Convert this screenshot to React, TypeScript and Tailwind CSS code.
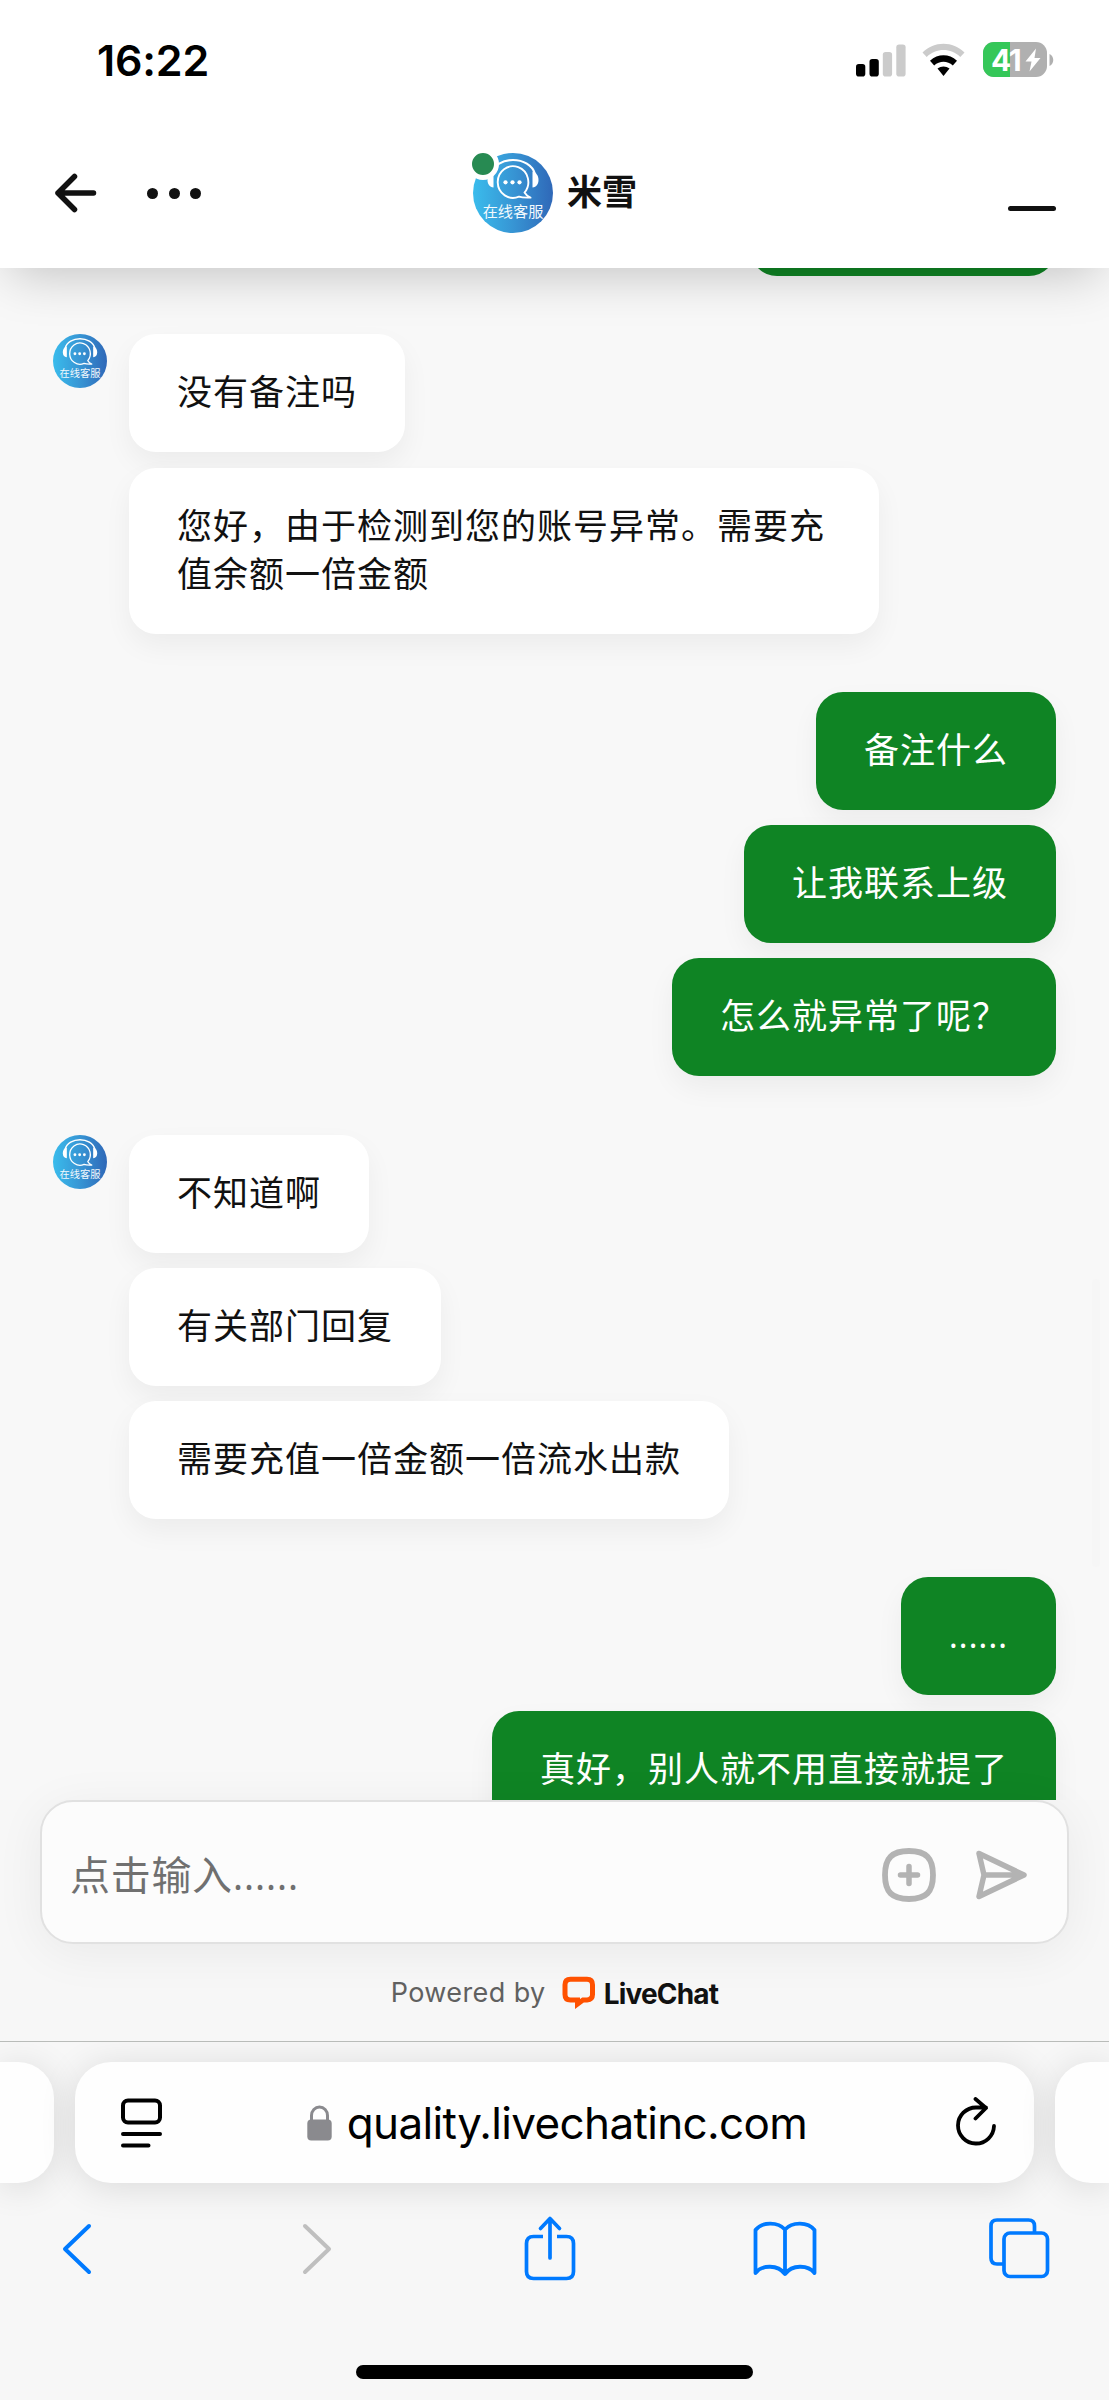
import { clsx } from 'clsx';

interface MessageGroup {
  from: 'agent' | 'visitor';
  messages: string[];
  className?: string;
}

const groups: MessageGroup[] = [
  {
    from: 'agent',
    messages: ['没有备注吗', '您好，由于检测到您的账号异常。需要充值余额一倍金额'],
    className: 'gap-4',
  },
  {
    from: 'visitor',
    messages: ['备注什么', '让我联系上级', '怎么就异常了呢？'],
    className: 'gap-[15px]',
  },
  {
    from: 'agent',
    messages: ['不知道啊', '有关部门回复', '需要充值一倍金额一倍流水出款'],
    className: 'gap-[15px]',
  },
  {
    from: 'visitor',
    messages: ['......', '真好，别人就不用直接就提了'],
    className: 'gap-4',
  },
];

function AgentAvatar({ className }: { className?: string }) {
  return (
    <svg viewBox="0 0 80 80" className={clsx('shrink-0', className)}>
      <defs>
        <linearGradient id="avatar" x1="0" y1="0" x2="1" y2="0">
          <stop offset="0" stopColor="#3abcec" />
          <stop offset="0.5" stopColor="#3795d4" />
          <stop offset="1" stopColor="#2f68b8" />
        </linearGradient>
      </defs>
      <circle cx="40" cy="40" r="40" fill="url(#avatar)" />
      {/* Headset */}
      <path d="M18 21C20.500 12 30 7 40 7s19.500 5 22 14" fill="none" stroke="#fff" strokeWidth="2.200" />
      <path d="M20.500 18.500v16c-4-.5-6-3.500-6-7.500s2-7.500 6-8.500zM59.500 18.500v16c4-.5 6-3.500 6-7.500s-2-7.500-6-8.500z" fill="#fff" />
      {/* Speech bubble */}
      <path
        d="M51.500 39.500A15.300 15.800 0 1 0 46 43.600c3 1.200 7 1.200 11.500 1-2.500-1-4.500-2.600-6-5.100z"
        fill="none"
        stroke="#fff"
        strokeWidth="1.900"
        strokeLinejoin="round"
      />
      <circle cx="32.500" cy="29.300" r="2.100" fill="#fff" />
      <circle cx="39.500" cy="29.300" r="2.100" fill="#fff" />
      <circle cx="46.500" cy="29.300" r="2.100" fill="#fff" />
      <text x="40" y="63.500" fontSize="15.200" textAnchor="middle" fill="#f2f9fd">
        在线客服
      </text>
    </svg>
  );
}

function StatusBar() {
  return (
    <div className="flex h-[118px] items-center justify-between pt-px pl-[97px] pr-[55px]">
      <span className="mt-px text-[43px] leading-none font-semibold tracking-[-0.200px] text-black">16:22</span>
      <div className="flex items-center">
        <svg width="50" height="34" viewBox="0 0 50 34" className="mr-[16px]">
          <rect x="0" y="21" width="9.300" height="12.500" rx="2.800" fill="#000" />
          <rect x="13.500" y="16" width="9.300" height="17.500" rx="2.800" fill="#000" />
          <rect x="26.800" y="9" width="9.300" height="24.500" rx="2.800" fill="#cbcbcb" />
          <rect x="40.300" y="1.500" width="9.300" height="32" rx="2.800" fill="#cbcbcb" />
        </svg>
        <svg width="44" height="34" viewBox="0 0 44 34" className="mr-[17px]">
          <path d="M0.500 9.500C12 -2.200 31 -2.200 42.500 9.500L38.300 14C29 4.800 14 4.800 4.700 14z" fill="#cbcbcb" />
          <path d="M8 17.800c8-7.300 19-7.300 27 0l-4.200 4.600c-5.400-4.800-13.200-4.800-18.600 0z" fill="#000" />
          <path d="M15.500 25.500c3.500-2.800 8.500-2.800 12 0l-6 7.500z" fill="#000" />
        </svg>
        <div className="relative flex h-[35px] w-[64px] items-center overflow-hidden rounded-[11px] bg-[#b0b0b0]">
          <div className="absolute inset-y-0 left-0 w-[27px] bg-[#35c759]" />
          <span className="relative ml-[8px] text-[30px] leading-none font-bold tracking-[-1.500px] text-white">41</span>
          <svg width="16" height="24" viewBox="0 0 16 24" className="absolute left-[42px] top-[6px]">
            <path d="M11 0.500L0.500 13.500h6L4.500 23.500L15.500 10h-6z" fill="#fff" />
          </svg>
        </div>
        <svg width="7" height="12" viewBox="0 0 7 12">
          <path d="M2.500 0c5 2 5 10 0 12z" fill="#b0b0b0" />
        </svg>
      </div>
    </div>
  );
}

function ChatHeader() {
  return (
    <div className="grid h-[150px] grid-cols-3 items-center pl-[54px] pr-[53px]">
      <div className="flex items-center gap-[50px]">
        <svg width="43" height="40" viewBox="0 0 43 40" fill="none" stroke="#111" strokeWidth="5.500" strokeLinecap="round" strokeLinejoin="round">
          <path d="M39.500 20H4M20.500 3.500L4 20l16.500 16.500" />
        </svg>
        <div className="flex gap-[10.500px]">
          <span className="size-[11px] rounded-full bg-[#111]" />
          <span className="size-[11px] rounded-full bg-[#111]" />
          <span className="size-[11px] rounded-full bg-[#111]" />
        </div>
      </div>
      <div className="-mt-px flex items-center justify-center gap-[14px]">
        <div className="relative size-20">
          <AgentAvatar className="size-20" />
          <span className="absolute -left-[6px] -top-[5px] size-8 rounded-full border-5 border-white bg-[#278a52]" />
        </div>
        <span className="text-[35px] leading-none font-bold text-[#111]">米雪</span>
      </div>
      <div className="mt-[31px] h-[5.500px] w-[48px] justify-self-end rounded-full bg-[#111]" />
    </div>
  );
}

function Bubble({ text, from }: { text: string; from: MessageGroup['from'] }) {
  return (
    <div
      className={clsx(
        'max-w-[750px] rounded-[27px] px-12 pt-[34px] pb-[36px] text-[35px] leading-[48px] shadow-[0_12px_28px_rgba(0,0,0,0.05)]',
        from === 'agent' ? 'bg-white text-[#111]' : 'bg-[#0f8424] text-white',
        text === '......' ? "font-['Open_Sans'] tracking-[0.700px]" : 'tracking-[1px]',
      )}
    >
      {text}
    </div>
  );
}

function Group({ group }: { group: MessageGroup }) {
  const isAgent = group.from === 'agent';
  return (
    <div className={clsx('flex items-start', !isAgent && 'justify-end', isAgent && 'gap-[22px]')}>
      {isAgent && <AgentAvatar className="size-[54px]" />}
      <div className={clsx('flex flex-col', isAgent ? 'items-start' : 'items-end', group.className)}>
        {group.messages.map((text) => (
          <Bubble key={text} text={text} from={group.from} />
        ))}
      </div>
    </div>
  );
}

function Composer() {
  return (
    <div className="relative h-[242px] shrink-0 border-b border-[#b9bcb9] bg-[#f7f7f7] px-10">
      <div className="flex h-36 items-center rounded-[33px] border-[2.500px] border-[#e1e1e1] bg-[#fcfcfc] pt-[6px] pl-[28px] pr-[39px] shadow-[0_8px_50px_rgba(0,0,0,0.06)]">
        <span className="flex-1 text-[40px] leading-none tracking-[0.700px] text-[#707070]">
          点击输入<span className="font-['Open_Sans'] tracking-[0.500px]">......</span>
        </span>
        <svg width="56" height="56" viewBox="0 0 56 56" fill="none" stroke="#b3b3b3" strokeLinecap="round" className="mr-[37px]">
          <path d="M28 4C45 4 52 11 52 28S45 52 28 52 4 45 4 28 11 4 28 4z" strokeWidth="5.800" />
          <path d="M28 19.500v17M19.500 28h17" strokeWidth="5.500" />
        </svg>
        <svg width="54" height="54" viewBox="0 0 54 54" fill="none" stroke="#b3b3b3" strokeWidth="5.500" strokeLinecap="round" strokeLinejoin="round">
          <path d="M5 5.500L50 27 5 48.500 10 27zM10 27h38" />
        </svg>
      </div>
      <div className="mt-[27px] flex items-center justify-center">
        <span className="text-[27px] leading-[40px] tracking-[0.400px] text-[#606060]">Powered by</span>
        <svg width="34" height="34" viewBox="0 0 34 34" className="mt-px ml-[16px]">
          <path
            d="M8.500 3.300h16.500q5.500 0 5.500 5.500v9.700q0 5-5.500 5.500h-4L15.500 28v-4H8.500q-5.500 0-5.500-5.500V8.800q0-5.500 5.500-5.500z"
            fill="none"
            stroke="#ff5100"
            strokeWidth="5"
          />
        </svg>
        <span className="mt-[3px] ml-[8px] text-[28px] leading-[40px] font-bold tracking-[-0.800px] text-[#111]">LiveChat</span>
      </div>
    </div>
  );
}

function BrowserBar() {
  return (
    <div className="flex h-[358px] shrink-0 flex-col overflow-hidden bg-[#f7f7f7] pt-[20px]">
      <div className="flex h-[121px] gap-[21px]">
        <div className="w-[54px] rounded-r-[36px] bg-[#fefefe] shadow-[0_4px_36px_rgba(0,0,0,0.12)]" />
        <div className="flex w-[959px] shrink-0 items-center rounded-[36px] bg-[#fefefe] pl-[45px] pr-[36px] shadow-[0_4px_36px_rgba(0,0,0,0.12)]">
          <svg width="43" height="52" viewBox="0 0 43 52" fill="none" stroke="#000" strokeWidth="4" strokeLinecap="round">
            <rect x="3" y="3.500" width="37" height="22" rx="5" />
            <path d="M3 37h37M3 48.500h25.500" />
          </svg>
          <div className="flex flex-1 items-center justify-center">
            <svg width="25" height="36" viewBox="0 0 25 36" className="-ml-[3px] mr-[15px]">
              <path d="M4.500 16V10.500a8 8.500 0 0 1 16 0V16" fill="none" stroke="#8a8a8e" strokeWidth="3" />
              <rect x="0.300" y="14.500" width="24.400" height="21" rx="4" fill="#8a8a8e" />
            </svg>
            <span className="text-[44px] leading-none tracking-[-0.650px] text-black">quality.livechatinc.com</span>
          </div>
          <svg width="44" height="52" viewBox="0 0 44 52" fill="none" stroke="#000" strokeWidth="3.800" strokeLinecap="round" strokeLinejoin="round">
            <path d="M40 29A18 18 0 1 1 22 10.500h10M21.500 2L32 11 21.500 21.500" />
          </svg>
        </div>
        <div className="w-[54px] shrink-0 rounded-l-[36px] bg-[#fefefe] shadow-[0_4px_36px_rgba(0,0,0,0.12)]" />
      </div>
      <div className="mt-[30px] flex h-[70px] items-center justify-between pl-[61px] pr-[59px]">
        <svg width="32" height="54" viewBox="0 0 32 54" fill="none" stroke="#007aff" strokeWidth="4" strokeLinecap="round" strokeLinejoin="round">
          <path d="M28 5L4 28 28 51" />
        </svg>
        <svg width="32" height="54" viewBox="0 0 32 54" fill="none" stroke="#bfbfbf" strokeWidth="4" strokeLinecap="round" strokeLinejoin="round" className="ml-[60px]">
          <path d="M4 5L28 28 4 51" />
        </svg>
        <svg width="52" height="68" viewBox="0 0 52 68" fill="none" stroke="#007aff" strokeWidth="3.700" strokeLinecap="round" className="ml-[42px]">
          <path d="M19 22.500H9.500q-7 0-7 7v28q0 7 7 7h33q7 0 7-7v-28q0-7-7-7H33" strokeLinecap="butt" />
          <path d="M26 44V5M16.500 14.500L26 4.500l9.500 10" strokeLinejoin="round" />
        </svg>
        <svg width="66" height="56" viewBox="0 0 66 56" fill="none" stroke="#007aff" strokeWidth="3.800" strokeLinecap="round" strokeLinejoin="round" className="ml-[28px]">
          <path d="M33 9.500C26 1.500 10 1.500 3.500 10v43C10 44.500 26 44.500 33 54c7-9.500 23-9.500 29.500-1V10C56 1.500 40 1.500 33 9.500zM33 9.500V54" />
        </svg>
        <svg width="62" height="62" viewBox="0 0 62 62" fill="none" stroke="#007aff" strokeWidth="3.700" className="ml-[22px]">
          <rect x="16" y="16" width="43.500" height="43.500" rx="6" />
          <path d="M46.500 16V9q0-6-6-6H9Q3 3 3 9v32q0 6 6 6h7" />
        </svg>
      </div>
      <div className="mx-auto mt-[82px] h-[14px] w-[397px] shrink-0 rounded-full bg-black" />
    </div>
  );
}

export default function App() {
  return (
    <div
      lang="zh-CN"
      className="flex h-[2400px] w-[1109px] flex-col overflow-hidden bg-[#f8f8f8] font-['Inter','Noto_Sans_CJK_SC',sans-serif]"
    >
      <header className="relative z-10 h-[268px] shrink-0 bg-white shadow-[0_16px_48px_-10px_rgba(0,0,0,0.22)]">
        <StatusBar />
        <ChatHeader />
      </header>

      <main className="relative flex h-[1532px] shrink-0 flex-col gap-[58.200px] overflow-hidden px-[53px]">
        {/* Last visible edge of the previous message */}
        <div className="-mt-[110px] h-[118px] w-[306px] shrink-0 self-end rounded-[27px] bg-[#0f8424]" />
        {groups.map((group, i) => (
          <Group key={i} group={group} />
        ))}
        {/* Scroll thumb */}
        <div className="absolute right-[9px] top-[1011px] h-[288px] w-[8px] rounded-full bg-[#f6f6f6]" />
      </main>

      <Composer />
      <BrowserBar />
    </div>
  );
}
